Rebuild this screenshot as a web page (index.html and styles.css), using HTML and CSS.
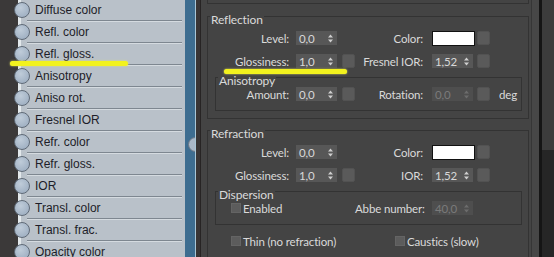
FILE: index.html
```html
<!DOCTYPE html>
<html lang="en">
<head>
  <meta charset="UTF-8" />
  <title>Material Editor</title>
  <link rel="stylesheet" href="styles.css">
</head>
<body>
  <div class="screen">
    <div class="nodes">
      <div class="node"><span class="socket"></span><span class="node-name">Diffuse color</span></div>
      <div class="node"><span class="socket"></span><span class="node-name">Refl. color</span></div>
      <div class="node"><span class="socket"></span><span class="node-name">Refl. gloss.</span></div>
      <div class="node"><span class="socket"></span><span class="node-name">Anisotropy</span></div>
      <div class="node"><span class="socket"></span><span class="node-name">Aniso rot.</span></div>
      <div class="node"><span class="socket"></span><span class="node-name">Fresnel IOR</span></div>
      <div class="node"><span class="socket"></span><span class="node-name">Refr. color</span></div>
      <div class="node"><span class="socket"></span><span class="node-name">Refr. gloss.</span></div>
      <div class="node"><span class="socket"></span><span class="node-name">IOR</span></div>
      <div class="node"><span class="socket"></span><span class="node-name">Transl. color</span></div>
      <div class="node"><span class="socket"></span><span class="node-name">Transl. frac.</span></div>
      <div class="node"><span class="socket"></span><span class="node-name">Opacity color</span></div>
    </div>
    <div class="edge"><span class="edge-socket"></span></div>
    <div class="gutter"></div>

    <div class="rollout">
      <div class="frame frame-prev"></div>

      <div class="frame frame-reflect">
        <div class="title"><span>Reflection</span></div>
        <div class="row">
          <span class="lab">Level:</span>
          <span class="spin">0,0<svg class="arr" width="5" height="9" viewBox="0 0 5 9"><path d="M0 3.5L2.5 0.5 5 3.5zM0 5.5L2.5 8.5 5 5.5z"/></svg></span>
          <span class="sq hidden"></span>
          <span class="lab2">Color:</span>
          <span class="swatch"></span>
          <span class="sq"></span>
        </div>
        <div class="row">
          <span class="lab">Glossiness:</span>
          <span class="spin">1,0<svg class="arr" width="5" height="9" viewBox="0 0 5 9"><path d="M0 3.5L2.5 0.5 5 3.5zM0 5.5L2.5 8.5 5 5.5z"/></svg></span>
          <span class="sq"></span>
          <span class="lab2">Fresnel IOR:</span>
          <span class="spin">1,52<svg class="arr" width="5" height="9" viewBox="0 0 5 9"><path d="M0 3.5L2.5 0.5 5 3.5zM0 5.5L2.5 8.5 5 5.5z"/></svg></span>
          <span class="sq"></span>
        </div>
        <div class="subframe">
          <div class="title"><span>Anisotropy</span></div>
          <div class="row">
            <span class="lab">Amount:</span>
            <span class="spin">0,0<svg class="arr" width="5" height="9" viewBox="0 0 5 9"><path d="M0 3.5L2.5 0.5 5 3.5zM0 5.5L2.5 8.5 5 5.5z"/></svg></span>
            <span class="sq"></span>
            <span class="lab2">Rotation:</span>
            <span class="spin off">0,0<svg class="arr" width="5" height="9" viewBox="0 0 5 9"><path d="M0 3.5L2.5 0.5 5 3.5zM0 5.5L2.5 8.5 5 5.5z"/></svg></span>
            <span class="sq"></span>
            <span class="unit">deg</span>
          </div>
        </div>
      </div>

      <div class="frame frame-refract">
        <div class="title"><span>Refraction</span></div>
        <div class="row">
          <span class="lab">Level:</span>
          <span class="spin">0,0<svg class="arr" width="5" height="9" viewBox="0 0 5 9"><path d="M0 3.5L2.5 0.5 5 3.5zM0 5.5L2.5 8.5 5 5.5z"/></svg></span>
          <span class="sq hidden"></span>
          <span class="lab2">Color:</span>
          <span class="swatch"></span>
          <span class="sq"></span>
        </div>
        <div class="row">
          <span class="lab">Glossiness:</span>
          <span class="spin">1,0<svg class="arr" width="5" height="9" viewBox="0 0 5 9"><path d="M0 3.5L2.5 0.5 5 3.5zM0 5.5L2.5 8.5 5 5.5z"/></svg></span>
          <span class="sq"></span>
          <span class="lab2">IOR:</span>
          <span class="spin">1,52<svg class="arr" width="5" height="9" viewBox="0 0 5 9"><path d="M0 3.5L2.5 0.5 5 3.5zM0 5.5L2.5 8.5 5 5.5z"/></svg></span>
          <span class="sq"></span>
        </div>
        <div class="subframe">
          <div class="title"><span>Dispersion</span></div>
          <div class="row">
            <span class="check-cell sub"><span class="check"></span>Enabled</span>
            <span class="lab2">Abbe number:</span>
            <span class="spin off">40,0<svg class="arr" width="5" height="9" viewBox="0 0 5 9"><path d="M0 3.5L2.5 0.5 5 3.5zM0 5.5L2.5 8.5 5 5.5z"/></svg></span>
          </div>
        </div>
        <div class="row">
          <span class="check-cell wide"><span class="check"></span>Thin (no refraction)</span>
          <span class="check-cell"><span class="check"></span>Caustics (slow)</span>
        </div>
      </div>
    </div>

    <div class="spacer"></div>
    <div class="rule"></div>
    <div class="side"></div>

    <div class="mark mark-left"></div>
    <div class="mark mark-right"></div>
  </div>
</body>
</html>
```

FILE: styles.css
```css
* {
  margin: 0;
  padding: 0;
  box-sizing: border-box;
}

body {
  width: 554px;
  height: 257px;
  overflow: hidden;
  background: #444444;
  font-family: Lato, "Noto Sans", sans-serif;
  font-size: 11.5px;
  letter-spacing: -0.15px;
  color: #dadada;
}

.screen {
  display: flex;
  height: 257px;
  position: relative;
  overflow: hidden;
}

/* node list on the left */
.nodes {
  width: 185px;
  flex: none;
  background: linear-gradient(to right, #3b3939 0 18px, #e3e9ec 18px 21px, #b9c1c9 21px);
  font-family: "Liberation Sans", Arial, sans-serif;
  letter-spacing: 0;
  color: #1d1d28;
}

.node {
  display: flex;
  align-items: center;
  height: 22px;
  margin: 0 3px 0 27px;
  border-bottom: 1px solid #7e8790;
  box-shadow: 0 1px 0 #d5dbe0;
}

.node:first-child {
  margin-top: -1px;
}

.socket {
  width: 16px;
  height: 16px;
  margin-left: -13px;
  flex: none;
  border-radius: 50%;
  border: 1px solid #5f6a77;
  background: radial-gradient(circle at 40% 35%, #bfccd9, #a3b3c5 70%);
}

.node-name {
  margin-left: 5px;
  font-size: 12px;
  white-space: nowrap;
}

.edge {
  width: 11px;
  flex: none;
  position: relative;
  overflow: hidden;
  background: #3e6d90;
  border-right: 1px solid #a9c6d6;
}

.edge-socket {
  position: absolute;
  left: 3px;
  top: 137px;
  width: 15px;
  height: 15px;
  border-radius: 50%;
  border: 1px solid #6a7684;
  background: #a9b8c8;
}

.gutter {
  width: 5px;
  flex: none;
  background: #393535;
  border-right: 1px solid #272424;
}

/* parameter rollout */
.rollout {
  width: 331px;
  flex: none;
  padding-left: 6px;
  border-right: 1px solid #363636;
}

.frame {
  width: 322px;
  border: 1px solid #333333;
  padding-bottom: 7px;
}

.frame-prev {
  height: 4px;
  border-top: 0;
  padding: 0;
}

.frame-reflect {
  margin-top: 12px;
}

.frame-refract {
  margin-top: 11px;
  padding-bottom: 20px;
}

.subframe {
  margin: 9px 6px 0 7px;
  border: 1px solid #333333;
  padding-bottom: 9px;
}

.title {
  height: 12px;
  line-height: 12px;
  margin-top: -3px;
  padding-left: 2px;
  font-size: 12px;
  white-space: nowrap;
}

.title span {
  background: #444444;
  padding: 0 1px;
}

.row {
  display: flex;
  align-items: center;
  height: 14px;
  margin-top: 9px;
  white-space: nowrap;
}

.title + .row {
  margin-top: 5px;
}

.subframe .title + .row {
  margin-top: 0;
}

.lab {
  width: 88px;
  flex: none;
  padding-right: 7px;
  text-align: right;
}

.subframe .lab {
  width: 80px;
}

.lab2 {
  width: 77px;
  flex: none;
  padding-right: 9px;
  text-align: right;
}

.spin {
  width: 41px;
  height: 14px;
  flex: none;
  display: flex;
  align-items: center;
  justify-content: space-between;
  padding: 0 4px 0 3px;
  background: #575757;
  color: #d8d8d8;
}

.lab2 + .spin {
  margin-right: 2px;
}

.spin.off {
  background: #4e4e4e;
  color: #7a7a7a;
}

.arr {
  fill: #cfcfcf;
}

.spin.off .arr {
  fill: #6c6c6c;
}

.sq {
  width: 13px;
  height: 14px;
  flex: none;
  margin-left: 5px;
  background: #5a5a5a;
  border: 1px solid #525252;
  border-radius: 2px;
}

.lab2 ~ .sq {
  margin-left: 2px;
}

.sq.hidden {
  visibility: hidden;
}

.swatch {
  width: 43px;
  height: 15px;
  flex: none;
  background: #ffffff;
  border: 1px solid #111111;
}

.unit {
  margin-left: 9px;
}

.check-cell {
  display: flex;
  align-items: center;
  flex: none;
}

.check-cell.sub {
  width: 139px;
  padding-left: 15px;
}

.check-cell.wide {
  width: 187px;
  padding-left: 23px;
}

.check {
  width: 10px;
  height: 10px;
  flex: none;
  margin-right: 2px;
  background: #5c5c5c;
  border: 1px solid #646464;
}

.spacer {
  width: 7px;
  flex: none;
  background: #474747;
}

.rule {
  width: 3px;
  flex: none;
  background: #151515;
}

.side {
  flex: 1;
  background: linear-gradient(#3c3c3c 0 150px, #262626 150px);
}

/* yellow annotation strokes */
.mark {
  position: absolute;
  height: 5px;
  background: #f2f21e;
  border-radius: 3px;
  box-shadow: 0 0 2px #e8e860;
}

.mark-left {
  left: 10px;
  top: 61px;
  width: 118px;
}

.mark-right {
  left: 224px;
  top: 69px;
  width: 123px;
}
```
